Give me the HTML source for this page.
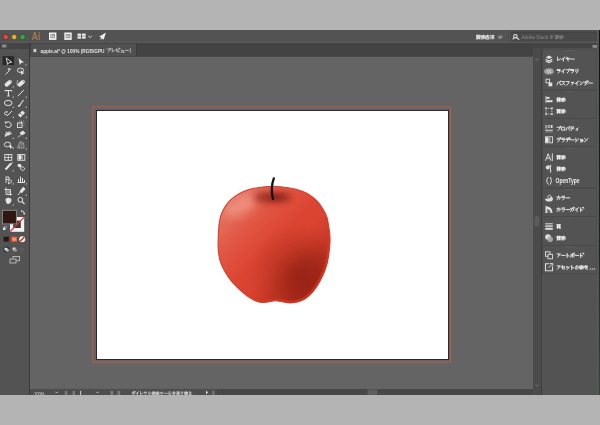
<!DOCTYPE html>
<html><head><meta charset="utf-8"><title>apple.ai - Illustrator</title>
<style>
*{margin:0;padding:0}
html,body{width:600px;height:425px;overflow:hidden;background:#b4b4b4;font-family:"Liberation Sans",sans-serif}
</style></head><body>
<svg width="600" height="425" viewBox="0 0 600 425" style="display:block;will-change:transform"><rect x="0" y="0" width="600" height="425" fill="#b4b4b4"/>
<rect x="0" y="30" width="600" height="13" fill="#535353"/>
<rect x="0" y="42" width="600" height="1" fill="#5a5a5a"/>
<rect x="0" y="43" width="600" height="14" fill="#434343"/>
<rect x="30" y="56" width="503" height="339" fill="#646464"/>
<rect x="30" y="56" width="503" height="1" fill="#4a4a4a"/>
<rect x="31" y="44" width="105" height="12" fill="#505050"/>
<rect x="136" y="44" width="1" height="12" fill="#3c3c3c"/>
<rect x="0" y="43" width="29" height="352" fill="#535353"/>
<rect x="0" y="43" width="29" height="6" fill="#444444"/>
<rect x="29" y="43" width="1" height="352" fill="#393939"/>
<rect x="2" y="44.5" width="4.5" height="3" fill="#8c8c8c"/>
<rect x="9" y="51" width="11" height="0.6" fill="#626262"/>
<rect x="533" y="43" width="8" height="352" fill="#4b4b4b"/>
<path d="M535.5,60.2 L536.8,58.8 L538.1,60.2" fill="none" stroke="#8a8a8a" stroke-width="0.7"/>
<path d="M535.5,384.8 L536.8,386.2 L538.1,384.8" fill="none" stroke="#8a8a8a" stroke-width="0.7"/>
<rect x="541" y="43" width="59" height="352" fill="#535353"/>
<rect x="530" y="43" width="70" height="5" fill="#444444"/>
<rect x="592.5" y="45" width="4.5" height="2.8" fill="#8c8c8c"/>
<rect x="541" y="48" width="1" height="347" fill="#3f3f3f"/>
<rect x="597" y="48" width="3" height="347" fill="#4d4d4d"/>
<rect x="534.6" y="216" width="4.7" height="10.4" rx="2.3" fill="#5c5c5c"/>
<rect x="30" y="389" width="503" height="6" fill="#4e4e4e"/>
<rect x="217" y="389" width="316" height="6" fill="#474747"/>
<rect x="367.5" y="389.5" width="10" height="5.5" rx="1" fill="#5e5e5e"/>
<rect x="92.5" y="105.5" width="359" height="258" fill="none" stroke="#5c6a6b" stroke-width="1" opacity="0.6"/>
<rect x="93.5" y="108.5" width="357" height="252" fill="none" stroke="#5c6a6b" stroke-width="1" opacity="0.6"/>
<rect x="92.6" y="106.8" width="358" height="255.4" fill="none" stroke="#a05a52" stroke-width="1.6"/>
<rect x="96" y="110" width="353" height="250" fill="#2a2a2a"/>
<rect x="97" y="111" width="351" height="248" fill="#ffffff"/>
<defs><clipPath id="ap"><path d="M272.60,186.20 C278.60,186.15 285.13,187.20 290.00,188.00 C294.87,188.80 298.47,189.80 301.80,191.00 C305.13,192.20 307.47,193.53 310.00,195.20 C312.53,196.87 314.83,198.70 317.00,201.00 C319.17,203.30 321.33,206.28 323.00,209.00 C324.67,211.72 326.03,214.35 327.00,217.30 C327.97,220.25 328.33,223.92 328.80,226.70 C329.27,229.48 329.60,231.38 329.80,234.00 C330.00,236.62 330.13,239.25 330.00,242.40 C329.87,245.55 329.47,249.42 329.00,252.90 C328.53,256.38 328.10,259.83 327.20,263.30 C326.30,266.77 325.22,270.00 323.60,273.70 C321.98,277.40 319.67,282.07 317.50,285.50 C315.33,288.93 313.18,291.80 310.60,294.30 C308.02,296.80 305.35,299.05 302.00,300.50 C298.65,301.95 294.00,302.83 290.50,303.00 C287.00,303.17 283.58,301.87 281.00,301.50 C278.42,301.13 277.17,300.72 275.00,300.80 C272.83,300.88 270.28,301.72 268.00,302.00 C265.72,302.28 263.60,302.78 261.30,302.50 C259.00,302.22 256.55,301.37 254.20,300.30 C251.85,299.23 249.55,297.80 247.20,296.10 C244.85,294.40 242.45,292.27 240.10,290.10 C237.75,287.93 235.05,285.25 233.10,283.10 C231.15,280.95 230.00,279.53 228.40,277.20 C226.80,274.87 224.83,271.65 223.50,269.10 C222.17,266.55 221.18,264.32 220.40,261.90 C219.62,259.48 219.18,257.18 218.80,254.60 C218.42,252.02 218.18,249.50 218.10,246.40 C218.02,243.30 218.17,239.40 218.30,236.00 C218.43,232.60 218.63,228.83 218.90,226.00 C219.17,223.17 219.45,221.08 219.90,219.00 C220.35,216.92 220.82,215.40 221.60,213.50 C222.38,211.60 223.32,209.65 224.60,207.60 C225.88,205.55 227.53,203.12 229.30,201.20 C231.07,199.28 232.85,197.73 235.20,196.10 C237.55,194.47 240.27,192.70 243.40,191.40 C246.53,190.10 249.13,189.17 254.00,188.30 C258.87,187.43 266.60,186.25 272.60,186.20 Z"/></clipPath><filter id="b1" x="-50%" y="-50%" width="200%" height="200%"><feGaussianBlur stdDeviation="0.8"/></filter><filter id="b2" x="-50%" y="-50%" width="200%" height="200%"><feGaussianBlur stdDeviation="2"/></filter><filter id="b3" x="-50%" y="-50%" width="200%" height="200%"><feGaussianBlur stdDeviation="3"/></filter><filter id="b5" x="-50%" y="-50%" width="200%" height="200%"><feGaussianBlur stdDeviation="5"/></filter><filter id="b8" x="-50%" y="-50%" width="200%" height="200%"><feGaussianBlur stdDeviation="8"/></filter><linearGradient id="lg" gradientUnits="userSpaceOnUse" x1="228" y1="200" x2="318" y2="288"><stop offset="0" stop-color="#f2a494" stop-opacity="0.55"/><stop offset="0.42" stop-color="#e86a58" stop-opacity="0.18"/><stop offset="0.62" stop-color="#b02818" stop-opacity="0.05"/><stop offset="1" stop-color="#7a1408" stop-opacity="0.55"/></linearGradient><radialGradient id="dk" gradientUnits="userSpaceOnUse" cx="298" cy="274" r="50"><stop offset="0" stop-color="#7a1608" stop-opacity="0.45"/><stop offset="1" stop-color="#7a1608" stop-opacity="0"/></radialGradient><linearGradient id="rimg" gradientUnits="userSpaceOnUse" x1="240" y1="215" x2="320" y2="295"><stop offset="0" stop-color="#e4442e" stop-opacity="0"/><stop offset="0.55" stop-color="#e4442e" stop-opacity="0"/><stop offset="0.8" stop-color="#e8472e" stop-opacity="1"/></linearGradient></defs>
<g clip-path="url(#ap)"><path d="M272.60,186.20 C278.60,186.15 285.13,187.20 290.00,188.00 C294.87,188.80 298.47,189.80 301.80,191.00 C305.13,192.20 307.47,193.53 310.00,195.20 C312.53,196.87 314.83,198.70 317.00,201.00 C319.17,203.30 321.33,206.28 323.00,209.00 C324.67,211.72 326.03,214.35 327.00,217.30 C327.97,220.25 328.33,223.92 328.80,226.70 C329.27,229.48 329.60,231.38 329.80,234.00 C330.00,236.62 330.13,239.25 330.00,242.40 C329.87,245.55 329.47,249.42 329.00,252.90 C328.53,256.38 328.10,259.83 327.20,263.30 C326.30,266.77 325.22,270.00 323.60,273.70 C321.98,277.40 319.67,282.07 317.50,285.50 C315.33,288.93 313.18,291.80 310.60,294.30 C308.02,296.80 305.35,299.05 302.00,300.50 C298.65,301.95 294.00,302.83 290.50,303.00 C287.00,303.17 283.58,301.87 281.00,301.50 C278.42,301.13 277.17,300.72 275.00,300.80 C272.83,300.88 270.28,301.72 268.00,302.00 C265.72,302.28 263.60,302.78 261.30,302.50 C259.00,302.22 256.55,301.37 254.20,300.30 C251.85,299.23 249.55,297.80 247.20,296.10 C244.85,294.40 242.45,292.27 240.10,290.10 C237.75,287.93 235.05,285.25 233.10,283.10 C231.15,280.95 230.00,279.53 228.40,277.20 C226.80,274.87 224.83,271.65 223.50,269.10 C222.17,266.55 221.18,264.32 220.40,261.90 C219.62,259.48 219.18,257.18 218.80,254.60 C218.42,252.02 218.18,249.50 218.10,246.40 C218.02,243.30 218.17,239.40 218.30,236.00 C218.43,232.60 218.63,228.83 218.90,226.00 C219.17,223.17 219.45,221.08 219.90,219.00 C220.35,216.92 220.82,215.40 221.60,213.50 C222.38,211.60 223.32,209.65 224.60,207.60 C225.88,205.55 227.53,203.12 229.30,201.20 C231.07,199.28 232.85,197.73 235.20,196.10 C237.55,194.47 240.27,192.70 243.40,191.40 C246.53,190.10 249.13,189.17 254.00,188.30 C258.87,187.43 266.60,186.25 272.60,186.20 Z" fill="#dc4431"/><rect x="210" y="180" width="130" height="130" fill="url(#lg)"/><rect x="210" y="180" width="130" height="130" fill="url(#dk)"/><ellipse cx="241" cy="206" rx="18" ry="9" fill="#f6b0a2" opacity="0.5" filter="url(#b5)" transform="rotate(-30 241 206)"/><ellipse cx="301" cy="274" rx="14" ry="24" fill="#7a1608" opacity="0.25" filter="url(#b8)" transform="rotate(40 301 274)"/><ellipse cx="273" cy="197.5" rx="19" ry="6" fill="#8a2216" opacity="0.7" filter="url(#b3)"/><ellipse cx="276" cy="197" rx="7" ry="3" fill="#7a1a10" opacity="0.45" filter="url(#b2)"/><path d="M272.60,186.20 C278.60,186.15 285.13,187.20 290.00,188.00 C294.87,188.80 298.47,189.80 301.80,191.00 C305.13,192.20 307.47,193.53 310.00,195.20 C312.53,196.87 314.83,198.70 317.00,201.00 C319.17,203.30 321.33,206.28 323.00,209.00 C324.67,211.72 326.03,214.35 327.00,217.30 C327.97,220.25 328.33,223.92 328.80,226.70 C329.27,229.48 329.60,231.38 329.80,234.00 C330.00,236.62 330.13,239.25 330.00,242.40 C329.87,245.55 329.47,249.42 329.00,252.90 C328.53,256.38 328.10,259.83 327.20,263.30 C326.30,266.77 325.22,270.00 323.60,273.70 C321.98,277.40 319.67,282.07 317.50,285.50 C315.33,288.93 313.18,291.80 310.60,294.30 C308.02,296.80 305.35,299.05 302.00,300.50 C298.65,301.95 294.00,302.83 290.50,303.00 C287.00,303.17 283.58,301.87 281.00,301.50 C278.42,301.13 277.17,300.72 275.00,300.80 C272.83,300.88 270.28,301.72 268.00,302.00 C265.72,302.28 263.60,302.78 261.30,302.50 C259.00,302.22 256.55,301.37 254.20,300.30 C251.85,299.23 249.55,297.80 247.20,296.10 C244.85,294.40 242.45,292.27 240.10,290.10 C237.75,287.93 235.05,285.25 233.10,283.10 C231.15,280.95 230.00,279.53 228.40,277.20 C226.80,274.87 224.83,271.65 223.50,269.10 C222.17,266.55 221.18,264.32 220.40,261.90 C219.62,259.48 219.18,257.18 218.80,254.60 C218.42,252.02 218.18,249.50 218.10,246.40 C218.02,243.30 218.17,239.40 218.30,236.00 C218.43,232.60 218.63,228.83 218.90,226.00 C219.17,223.17 219.45,221.08 219.90,219.00 C220.35,216.92 220.82,215.40 221.60,213.50 C222.38,211.60 223.32,209.65 224.60,207.60 C225.88,205.55 227.53,203.12 229.30,201.20 C231.07,199.28 232.85,197.73 235.20,196.10 C237.55,194.47 240.27,192.70 243.40,191.40 C246.53,190.10 249.13,189.17 254.00,188.30 C258.87,187.43 266.60,186.25 272.60,186.20 Z" fill="none" stroke="url(#rimg)" stroke-width="3.2" opacity="0.8" filter="url(#b1)"/></g>
<path d="M272.60,186.20 C278.60,186.15 285.13,187.20 290.00,188.00 C294.87,188.80 298.47,189.80 301.80,191.00 C305.13,192.20 307.47,193.53 310.00,195.20 C312.53,196.87 314.83,198.70 317.00,201.00 C319.17,203.30 321.33,206.28 323.00,209.00 C324.67,211.72 326.03,214.35 327.00,217.30 C327.97,220.25 328.33,223.92 328.80,226.70 C329.27,229.48 329.60,231.38 329.80,234.00 C330.00,236.62 330.13,239.25 330.00,242.40 C329.87,245.55 329.47,249.42 329.00,252.90 C328.53,256.38 328.10,259.83 327.20,263.30 C326.30,266.77 325.22,270.00 323.60,273.70 C321.98,277.40 319.67,282.07 317.50,285.50 C315.33,288.93 313.18,291.80 310.60,294.30 C308.02,296.80 305.35,299.05 302.00,300.50 C298.65,301.95 294.00,302.83 290.50,303.00 C287.00,303.17 283.58,301.87 281.00,301.50 C278.42,301.13 277.17,300.72 275.00,300.80 C272.83,300.88 270.28,301.72 268.00,302.00 C265.72,302.28 263.60,302.78 261.30,302.50 C259.00,302.22 256.55,301.37 254.20,300.30 C251.85,299.23 249.55,297.80 247.20,296.10 C244.85,294.40 242.45,292.27 240.10,290.10 C237.75,287.93 235.05,285.25 233.10,283.10 C231.15,280.95 230.00,279.53 228.40,277.20 C226.80,274.87 224.83,271.65 223.50,269.10 C222.17,266.55 221.18,264.32 220.40,261.90 C219.62,259.48 219.18,257.18 218.80,254.60 C218.42,252.02 218.18,249.50 218.10,246.40 C218.02,243.30 218.17,239.40 218.30,236.00 C218.43,232.60 218.63,228.83 218.90,226.00 C219.17,223.17 219.45,221.08 219.90,219.00 C220.35,216.92 220.82,215.40 221.60,213.50 C222.38,211.60 223.32,209.65 224.60,207.60 C225.88,205.55 227.53,203.12 229.30,201.20 C231.07,199.28 232.85,197.73 235.20,196.10 C237.55,194.47 240.27,192.70 243.40,191.40 C246.53,190.10 249.13,189.17 254.00,188.30 C258.87,187.43 266.60,186.25 272.60,186.20 Z" fill="none" stroke="#cf3522" stroke-width="1.1" opacity="0.9"/>
<path d="M273.8,178.4 Q270.2,188 273,199" fill="none" stroke="#121212" stroke-width="2.3" stroke-linecap="round"/>
<circle cx="5.7" cy="37" r="2.7" fill="#e9463f" stroke="#3a3a3a" stroke-width="0.7"/>
<circle cx="14.2" cy="37" r="2.7" fill="#e2b32c" stroke="#3a3a3a" stroke-width="0.7"/>
<circle cx="22.6" cy="37" r="2.7" fill="#2fae3a" stroke="#3a3a3a" stroke-width="0.7"/>
<text x="31.7" y="39.7" font-family="Liberation Sans" font-weight="bold" font-size="10.4" fill="#a87852" textLength="8.6" lengthAdjust="spacingAndGlyphs">Ai</text>
<rect x="49" y="32.5" width="7.4" height="7.4" fill="#f2f2f2"/>
<rect x="50.4" y="34.1" width="4.6" height="4.1" fill="#8e8e8e"/>
<rect x="51.1" y="35" width="1.3" height="2.4" fill="#d8d8d8"/><rect x="52.9" y="35.8" width="1.3" height="1.6" fill="#d8d8d8"/>
<rect x="64.3" y="32.5" width="7.4" height="7.4" fill="#f2f2f2"/>
<rect x="65.7" y="34.1" width="4.6" height="4.1" fill="#8e8e8e"/>
<rect x="66.39999999999999" y="35" width="1.3" height="2.4" fill="#d8d8d8"/><rect x="68.2" y="35.8" width="1.3" height="1.6" fill="#d8d8d8"/>
<rect x="77.5" y="33.6" width="3.6" height="2.2" fill="#eeeeee"/><rect x="82" y="33.6" width="3.7" height="2.2" fill="#eeeeee"/>
<rect x="77.5" y="36.4" width="3.6" height="2.2" fill="#eeeeee"/><rect x="82" y="36.4" width="3.7" height="2.2" fill="#eeeeee"/>
<path d="M88,35.8 L90,37.6 L92,35.8" fill="none" stroke="#cfcfcf" stroke-width="0.9"/>
<path d="M106,32.5 L99,36.8 L101.2,37.2 L100.2,39.8 L102.8,38.4 L103.5,40 Z" fill="#f0f0f0"/>
<g fill="none" stroke="#f2f2f2" stroke-width="1.7" stroke-linecap="square" stroke-linejoin="miter"><path transform="translate(476.00,34.70) scale(0.460)" d="M1,1.5 H9 M1,4.5 H9 M1.5,7.5 H8.5 M2.5,1 V9.5 M7,1 V9.5 M4.5,3 L2,9.5 M5.5,6 L9,9.5"/><path transform="translate(480.60,34.70) scale(0.460)" d="M1.5,2 H4.5 V5 H1.5 Z M1,7 H5 M3,5 V9.5 M6,1 V9.5 M6,2 H9 V8 M6,5 H9"/><path transform="translate(485.20,34.70) scale(0.460)" d="M1,2.5 H9 M5,1 V4.5 M2,4.5 H8 V9.5 H2 Z M2,7 H8"/><path transform="translate(489.80,34.70) scale(0.460)" d="M1,1.5 L3,3 M1,5 L3,6.5 M1.5,9.5 L3.5,7 M4.5,2 H9 M5,4.5 H8.5 M6.8,1 V9.5 M4.5,7 H9.2"/></g>
<circle cx="500.2" cy="37" r="2.6" fill="#6a6a6a"/><path d="M498.8,36.4 L500.2,37.8 L501.6,36.4" fill="none" stroke="#e0e0e0" stroke-width="0.8"/>
<rect x="508" y="32" width="0.8" height="10" fill="#484848"/><rect x="508.8" y="32" width="0.6" height="10" fill="#5c5c5c"/>
<rect x="510.5" y="31.8" width="87" height="9.8" fill="#494949"/>
<rect x="510.5" y="31.8" width="87" height="0.8" fill="#3f3f3f"/>
<circle cx="515.4" cy="36.2" r="1.7" fill="none" stroke="#e4e4e4" stroke-width="1.1"/><path d="M512.8,39.4 Q513.5,38.2 514.3,37.8 M516.5,37.8 L519.3,39.6" fill="none" stroke="#e4e4e4" stroke-width="1.1"/>
<text x="521.5" y="39.2" font-family="Liberation Sans" font-size="5.6" fill="#8c8c8c" textLength="26.5" lengthAdjust="spacingAndGlyphs">Adobe Stock</text>
<g fill="none" stroke="#8c8c8c" stroke-width="1.3" stroke-linecap="square" stroke-linejoin="miter"><path transform="translate(549.50,35.00) scale(0.400)" d="M2,2.6 H8 M5,1 L2,7.5 Q5,5 7,6.5 Q8.5,8 4,9.4 M8.8,4.6 L6.8,5.8"/></g>
<g fill="none" stroke="#8c8c8c" stroke-width="1.3" stroke-linecap="square" stroke-linejoin="miter"><path transform="translate(555.00,35.00) scale(0.400)" d="M1,1.5 H9 M1,4.5 H9 M1.5,7.5 H8.5 M2.5,1 V9.5 M7,1 V9.5 M4.5,3 L2,9.5 M5.5,6 L9,9.5"/><path transform="translate(559.40,35.00) scale(0.400)" d="M1.5,2 H4.5 V5 H1.5 Z M1,7 H5 M3,5 V9.5 M6,1 V9.5 M6,2 H9 V8 M6,5 H9"/></g>
<path d="M33.6,49.2 L36.2,51.8 M36.2,49.2 L33.6,51.8" stroke="#e8e8e8" stroke-width="1.2"/>
<text x="40.5" y="52.6" font-family="Liberation Sans" font-size="6.2" font-weight="bold" fill="#e4e4e4" textLength="64" lengthAdjust="spacingAndGlyphs">apple.ai* @ 100% (RGB/GPU</text>
<g fill="none" stroke="#e4e4e4" stroke-width="1.6" stroke-linecap="square" stroke-linejoin="miter"><path transform="translate(106.50,48.20) scale(0.420)" d="M1.5,2.2 H8.2 Q7.5,7.5 3.5,9.6 M9.4,0.9 m-1,0 a1,1 0 1,0 2,0 a1,1 0 1,0 -2,0"/><path transform="translate(111.10,48.20) scale(0.420)" d="M2.5,1 V8.8 L9,4.5"/><path transform="translate(115.70,48.20) scale(0.420)" d="M2.5,1 V8.5 H8.5 M2.5,5 L7.2,3.5 M8.2,0.3 L8.9,1.8 M9.6,0.1 L10.3,1.6"/><path transform="translate(120.30,48.20) scale(0.420)" d="M3,5.2 H7.2 V9.3 M2,9.3 H9"/><path transform="translate(124.90,48.20) scale(0.420)" d="M1,5.2 H9.2"/></g>
<text x="129.5" y="52.4" font-family="Liberation Sans" font-size="6" fill="#dcdcdc">)</text>
<rect x="542.5" y="49" width="54.5" height="41" fill="none" stroke="#4a4a4a" stroke-width="0.8"/>
<rect x="565" y="50.3" width="10" height="0.6" fill="#626262"/>
<rect x="542.5" y="90" width="54.5" height="28.5" fill="none" stroke="#4a4a4a" stroke-width="0.8"/>
<rect x="565" y="91.3" width="10" height="0.6" fill="#626262"/>
<rect x="542.5" y="118.5" width="54.5" height="28.0" fill="none" stroke="#4a4a4a" stroke-width="0.8"/>
<rect x="565" y="119.8" width="10" height="0.6" fill="#626262"/>
<rect x="542.5" y="146.5" width="54.5" height="41.5" fill="none" stroke="#4a4a4a" stroke-width="0.8"/>
<rect x="565" y="147.8" width="10" height="0.6" fill="#626262"/>
<rect x="542.5" y="188" width="54.5" height="28.5" fill="none" stroke="#4a4a4a" stroke-width="0.8"/>
<rect x="565" y="189.3" width="10" height="0.6" fill="#626262"/>
<rect x="542.5" y="216.5" width="54.5" height="29.0" fill="none" stroke="#4a4a4a" stroke-width="0.8"/>
<rect x="565" y="217.8" width="10" height="0.6" fill="#626262"/>
<rect x="542.5" y="245.5" width="54.5" height="28.5" fill="none" stroke="#4a4a4a" stroke-width="0.8"/>
<rect x="565" y="246.8" width="10" height="0.6" fill="#626262"/>
<g fill="none" stroke="#efefef" stroke-width="2.1" stroke-linecap="square" stroke-linejoin="miter"><path transform="translate(556.50,56.80) scale(0.440)" d="M2.5,1 V8.8 L9,4.5"/><path transform="translate(561.05,56.80) scale(0.440)" d="M8.5,1 L1.5,6.2 M5.2,3.8 V9.6"/><path transform="translate(565.60,56.80) scale(0.440)" d="M1,4.2 L9,3.2 L7.2,6 M3.2,1 L5.8,9.6"/><path transform="translate(570.15,56.80) scale(0.440)" d="M1,5.2 H9.2"/></g>
<path d="M549,55.5 L552.3,57.2 L549,59 L545.7,57.2 Z" fill="#dedede"/><path d="M545.7,59.2 L549,61 L552.3,59.2 M545.7,61 L549,62.7 L552.3,61" fill="none" stroke="#dedede" stroke-width="1.1"/>
<g fill="none" stroke="#efefef" stroke-width="2.1" stroke-linecap="square" stroke-linejoin="miter"><path transform="translate(556.50,68.80) scale(0.440)" d="M2,1.5 H8 M1.5,4 H8.5 Q7.5,8 4,9.6"/><path transform="translate(561.05,68.80) scale(0.440)" d="M8.5,1 L1.5,6.2 M5.2,3.8 V9.6"/><path transform="translate(565.60,68.80) scale(0.440)" d="M1.5,2.2 H8.2 Q7.5,7.5 3.5,9.6 M9.4,0.9 m-1,0 a1,1 0 1,0 2,0 a1,1 0 1,0 -2,0"/><path transform="translate(570.15,68.80) scale(0.440)" d="M2,1.5 H8 M1.5,4 H8.5 Q7.5,8 4,9.6"/><path transform="translate(574.70,68.80) scale(0.440)" d="M2.8,1.2 V6.2 M7.2,1 V5.5 Q7,8.5 3.8,9.8"/></g>
<ellipse cx="549" cy="71.4" rx="4.9" ry="3.1" fill="#9c9c9c"/><path d="M548.8,70 a1.5,1.3 0 1,0 0.2,2.6 M551,70 a1.5,1.3 0 1,0 0.2,2.6" fill="none" stroke="#e8e8e8" stroke-width="0.8"/>
<g fill="none" stroke="#efefef" stroke-width="2.1" stroke-linecap="square" stroke-linejoin="miter"><path transform="translate(556.50,80.80) scale(0.440)" d="M3.5,3 L1,9 M6,3 L9.2,9 M9.2,1.3 m-1,0 a1,1 0 1,0 2,0 a1,1 0 1,0 -2,0"/><path transform="translate(561.05,80.80) scale(0.440)" d="M2,1.8 H8 Q6,6.5 1.5,9.5 M5.5,6.3 L9.2,9.5"/><path transform="translate(565.60,80.80) scale(0.440)" d="M1.5,2 H8.5 Q8,7 3,9.6"/><path transform="translate(570.15,80.80) scale(0.440)" d="M3,3.6 H8.6 L6.8,6 M6,5.2 Q5.5,8.2 3.4,9.6"/><path transform="translate(574.70,80.80) scale(0.440)" d="M8.5,1 L1.5,6.2 M5.2,3.8 V9.6"/><path transform="translate(579.25,80.80) scale(0.440)" d="M1.8,2 L4,3.8 M2,9.2 Q7,7.5 9.2,2.5"/><path transform="translate(583.80,80.80) scale(0.440)" d="M4.5,1 L1.5,5 M3.5,2.5 H8 Q7,7.5 2.5,9.6 M3.8,5 L7,6.8 M8.2,0.3 L8.9,1.8 M9.6,0.1 L10.3,1.6"/><path transform="translate(588.35,80.80) scale(0.440)" d="M1,5.2 H9.2"/></g>
<rect x="546" y="79.2" width="3.6" height="3.6" fill="none" stroke="#dedede" stroke-width="0.9"/><rect x="548.5" y="82.5" width="3.8" height="3.8" fill="#dedede"/>
<g fill="none" stroke="#efefef" stroke-width="2.1" stroke-linecap="square" stroke-linejoin="miter"><path transform="translate(556.50,97.50) scale(0.440)" d="M1,1.5 H9 M1,4.5 H9 M1.5,7.5 H8.5 M2.5,1 V9.5 M7,1 V9.5 M4.5,3 L2,9.5 M5.5,6 L9,9.5"/><path transform="translate(561.05,97.50) scale(0.440)" d="M1.5,2 H4.5 V5 H1.5 Z M1,7 H5 M3,5 V9.5 M6,1 V9.5 M6,2 H9 V8 M6,5 H9"/></g>
<rect x="545.5" y="96.2" width="1" height="6.5" fill="#dedede"/><rect x="546.5" y="96.9" width="3" height="2" fill="#dedede"/><rect x="546.5" y="100.2" width="6" height="2" fill="#dedede"/>
<g fill="none" stroke="#efefef" stroke-width="2.1" stroke-linecap="square" stroke-linejoin="miter"><path transform="translate(556.50,109.00) scale(0.440)" d="M1,1.5 H9 M1,4.5 H9 M1.5,7.5 H8.5 M2.5,1 V9.5 M7,1 V9.5 M4.5,3 L2,9.5 M5.5,6 L9,9.5"/><path transform="translate(561.05,109.00) scale(0.440)" d="M1.5,2 H4.5 V5 H1.5 Z M1,7 H5 M3,5 V9.5 M6,1 V9.5 M6,2 H9 V8 M6,5 H9"/></g>
<rect x="546.2" y="108.4" width="5.6" height="5.6" fill="none" stroke="#dedede" stroke-width="0.8" stroke-dasharray="1.2 0.8"/><rect x="545.2" y="107.4" width="1.6" height="1.6" fill="#dedede"/><rect x="551.2" y="107.4" width="1.6" height="1.6" fill="#dedede"/><rect x="545.2" y="113.4" width="1.6" height="1.6" fill="#dedede"/><rect x="551.2" y="113.4" width="1.6" height="1.6" fill="#dedede"/>
<g fill="none" stroke="#efefef" stroke-width="2.1" stroke-linecap="square" stroke-linejoin="miter"><path transform="translate(556.50,126.30) scale(0.440)" d="M1.5,2.2 H8.2 Q7.5,7.5 3.5,9.6 M9.4,0.9 m-1,0 a1,1 0 1,0 2,0 a1,1 0 1,0 -2,0"/><path transform="translate(561.05,126.30) scale(0.440)" d="M2,2 H8.2 V8.6 H2 Z"/><path transform="translate(565.60,126.30) scale(0.440)" d="M3.5,3 L1,9 M6,3 L9.2,9 M9.2,1.3 m-1,0 a1,1 0 1,0 2,0 a1,1 0 1,0 -2,0"/><path transform="translate(570.15,126.30) scale(0.440)" d="M2.5,1.5 H7.5 M1,4.2 H9 M5,4.2 Q5,8 3,9.6"/><path transform="translate(574.70,126.30) scale(0.440)" d="M7.5,4 L3,7.5 M5.5,6 V9.8"/></g>
<rect x="545.5" y="125.0" width="1" height="3.5" fill="#dedede"/><circle cx="549" cy="126.5" r="1.2" fill="none" stroke="#dedede" stroke-width="0.8"/><rect x="551" y="125.0" width="1.5" height="3" fill="#dedede"/><rect x="545.2" y="129.7" width="7.6" height="1" fill="#dedede"/><rect x="545.2" y="131.5" width="7.6" height="0.8" fill="#9a9a9a"/>
<g fill="none" stroke="#efefef" stroke-width="2.1" stroke-linecap="square" stroke-linejoin="miter"><path transform="translate(556.50,137.60) scale(0.440)" d="M4,1 L1.5,4.5 M3,2.8 H8 Q7,7.5 3,9.6 M8.2,0.3 L8.9,1.8 M9.6,0.1 L10.3,1.6"/><path transform="translate(561.05,137.60) scale(0.440)" d="M2,1.5 H8 M1.5,4 H8.5 Q7.5,8 4,9.6"/><path transform="translate(565.60,137.60) scale(0.440)" d="M2.5,1.5 H7.5 M1,4.2 H9 M5,4.2 Q5,8 3,9.6 M8.2,0.3 L8.9,1.8 M9.6,0.1 L10.3,1.6"/><path transform="translate(570.15,137.60) scale(0.440)" d="M1,5.2 H9.2"/><path transform="translate(574.70,137.60) scale(0.440)" d="M2,1.8 L3.8,3 M1.5,4.8 L3.3,6 M2,9.6 Q7,7.5 9.2,2.5"/><path transform="translate(579.25,137.60) scale(0.440)" d="M3,4.2 H8 V9.6 H3 M3,6.9 H8"/><path transform="translate(583.80,137.60) scale(0.440)" d="M1.8,2 L4,3.8 M2,9.2 Q7,7.5 9.2,2.5"/></g>
<rect x="545.5" y="136.8" width="7" height="6" fill="none" stroke="#dedede" stroke-width="0.9"/><rect x="546" y="137.3" width="2" height="5" fill="#f0f0f0"/><rect x="548" y="137.3" width="2.5" height="5" fill="#a0a0a0"/>
<g fill="none" stroke="#efefef" stroke-width="2.1" stroke-linecap="square" stroke-linejoin="miter"><path transform="translate(556.50,155.00) scale(0.440)" d="M1,1.5 H9 M1,4.5 H9 M1.5,7.5 H8.5 M2.5,1 V9.5 M7,1 V9.5 M4.5,3 L2,9.5 M5.5,6 L9,9.5"/><path transform="translate(561.05,155.00) scale(0.440)" d="M1.5,2 H4.5 V5 H1.5 Z M1,7 H5 M3,5 V9.5 M6,1 V9.5 M6,2 H9 V8 M6,5 H9"/></g>
<path d="M545.5,160.7 L548.2,153.7 L550.8,160.7 M546.7,158.2 H549.6 M552.3,153.39999999999998 V161.0" fill="none" stroke="#dedede" stroke-width="1"/>
<g fill="none" stroke="#efefef" stroke-width="2.1" stroke-linecap="square" stroke-linejoin="miter"><path transform="translate(556.50,166.60) scale(0.440)" d="M1,1.5 H9 M1,4.5 H9 M1.5,7.5 H8.5 M2.5,1 V9.5 M7,1 V9.5 M4.5,3 L2,9.5 M5.5,6 L9,9.5"/><path transform="translate(561.05,166.60) scale(0.440)" d="M1.5,2 H4.5 V5 H1.5 Z M1,7 H5 M3,5 V9.5 M6,1 V9.5 M6,2 H9 V8 M6,5 H9"/></g>
<path d="M548,165.8 h3.5 M550.5,165.8 v6.5" fill="none" stroke="#dedede" stroke-width="0.9"/><circle cx="547.8" cy="167.5" r="2" fill="#dedede"/><rect x="550.2" y="170.3" width="1" height="2" fill="#dedede"/>
<text x="555.6" y="183.10000000000002" font-family="Liberation Sans" font-weight="bold" font-size="6.6" fill="#ececec" textLength="24" lengthAdjust="spacingAndGlyphs">OpenType</text>
<path d="M548.5,177.0 Q545,180.8 548.5,184.60000000000002 M550.5,177.0 Q552.5,180.8 550.2,184.60000000000002" fill="none" stroke="#dedede" stroke-width="1"/>
<g fill="none" stroke="#efefef" stroke-width="2.1" stroke-linecap="square" stroke-linejoin="miter"><path transform="translate(556.50,195.60) scale(0.440)" d="M1,3.5 H8.5 Q8.5,9 6.5,9 M4.8,1 Q4.5,7 1.5,9.6"/><path transform="translate(561.05,195.60) scale(0.440)" d="M2,1.5 H8 M1.5,4 H8.5 Q7.5,8 4,9.6"/><path transform="translate(565.60,195.60) scale(0.440)" d="M1,5.2 H9.2"/></g>
<path d="M545,198.8 a4,2.8 0 1,0 8,0 a4,2.8 0 0,0 -2,-2.4 l-2,2 z" fill="#dedede"/><circle cx="549.5" cy="196.8" r="1.6" fill="#535353" stroke="#dedede" stroke-width="0.8"/>
<g fill="none" stroke="#efefef" stroke-width="2.1" stroke-linecap="square" stroke-linejoin="miter"><path transform="translate(556.50,207.30) scale(0.440)" d="M1,3.5 H8.5 Q8.5,9 6.5,9 M4.8,1 Q4.5,7 1.5,9.6"/><path transform="translate(561.05,207.30) scale(0.440)" d="M2,1.5 H8 M1.5,4 H8.5 Q7.5,8 4,9.6"/><path transform="translate(565.60,207.30) scale(0.440)" d="M1,5.2 H9.2"/><path transform="translate(570.15,207.30) scale(0.440)" d="M1,3.5 H8 Q8,9 6.2,9 M4.5,1 Q4.2,7 1.2,9.6 M8.2,0.3 L8.9,1.8 M9.6,0.1 L10.3,1.6"/><path transform="translate(574.70,207.30) scale(0.440)" d="M8.5,1 L1.5,6.2 M5.2,3.8 V9.6"/><path transform="translate(579.25,207.30) scale(0.440)" d="M3.2,1 V9.8 M3.2,4.5 L7.5,6.5 M8.2,0.3 L8.9,1.8 M9.6,0.1 L10.3,1.6"/></g>
<path d="M545.5,213.0 V206.0 Q552.5,206.5 552.5,213.0 Z" fill="#dedede"/><path d="M547.2,213.0 V209.0 Q550.5,209.5 550.8,213.0" fill="#6a6a6a"/>
<g fill="none" stroke="#efefef" stroke-width="2.1" stroke-linecap="square" stroke-linejoin="miter"><path transform="translate(556.50,224.10) scale(0.440)" d="M1,1.5 H9 M1,4.5 H9 M1.5,7.5 H8.5 M2.5,1 V9.5 M7,1 V9.5 M4.5,3 L2,9.5 M5.5,6 L9,9.5"/></g>
<rect x="545.2" y="223.3" width="7.6" height="1" fill="#dedede"/><rect x="545.2" y="225.4" width="7.6" height="1.4" fill="#dedede"/><rect x="545.2" y="227.8" width="7.6" height="2" fill="#dedede"/>
<g fill="none" stroke="#efefef" stroke-width="2.1" stroke-linecap="square" stroke-linejoin="miter"><path transform="translate(556.50,235.80) scale(0.440)" d="M1,1.5 H9 M1,4.5 H9 M1.5,7.5 H8.5 M2.5,1 V9.5 M7,1 V9.5 M4.5,3 L2,9.5 M5.5,6 L9,9.5"/><path transform="translate(561.05,235.80) scale(0.440)" d="M1.5,2 H4.5 V5 H1.5 Z M1,7 H5 M3,5 V9.5 M6,1 V9.5 M6,2 H9 V8 M6,5 H9"/></g>
<circle cx="548" cy="237" r="2.8" fill="#dedede"/><circle cx="550.2" cy="239.2" r="2.8" fill="#a8a8a8" opacity="0.9"/>
<g fill="none" stroke="#efefef" stroke-width="2.1" stroke-linecap="square" stroke-linejoin="miter"><path transform="translate(556.50,253.10) scale(0.440)" d="M1.5,1.8 H9 L6.5,5 M5.5,4 Q5,8 2.5,9.6"/><path transform="translate(561.05,253.10) scale(0.440)" d="M1,5.2 H9.2"/><path transform="translate(565.60,253.10) scale(0.440)" d="M3.5,1 V9.8 M3.5,4.5 L8,6.8"/><path transform="translate(570.15,253.10) scale(0.440)" d="M1,4 H8.6 M4.8,1 V9.6 M2.4,6 L1,8.5 M7.2,6 L8.6,8.5 M8.2,0.3 L8.9,1.8 M9.6,0.1 L10.3,1.6"/><path transform="translate(574.70,253.10) scale(0.440)" d="M1,5.2 H9.2"/><path transform="translate(579.25,253.10) scale(0.440)" d="M3.2,1 V9.8 M3.2,4.5 L7.5,6.5 M8.2,0.3 L8.9,1.8 M9.6,0.1 L10.3,1.6"/></g>
<rect x="545.5" y="251.8" width="4.5" height="4.5" fill="none" stroke="#dedede" stroke-width="0.9"/><rect x="548" y="254.3" width="4.5" height="4.5" fill="#535353" stroke="#dedede" stroke-width="0.9"/>
<g fill="none" stroke="#efefef" stroke-width="2.1" stroke-linecap="square" stroke-linejoin="miter"><path transform="translate(556.50,265.10) scale(0.440)" d="M1.5,1.8 H9 L6.5,5 M5.5,4 Q5,8 2.5,9.6"/><path transform="translate(561.05,265.10) scale(0.440)" d="M1,4.8 L9,3.6 L6.5,6.4 M3,1 V8.6 H8.5"/><path transform="translate(565.60,265.10) scale(0.440)" d="M2.5,4 L3.2,6 M4.8,3.6 L5.5,5.6 M8.5,3.8 Q7,8.5 3.5,9.8"/><path transform="translate(570.15,265.10) scale(0.440)" d="M3.5,1 V9.8 M3.5,4.5 L8,6.8"/><path transform="translate(574.70,265.10) scale(0.440)" d="M5.2,2.2 Q4.5,8 2.6,8.8 Q0.8,9 1,6 Q1.5,2 5.5,2 Q9,2.2 9,5.5 Q8.8,8.6 5.5,9.4"/><path transform="translate(579.25,265.10) scale(0.440)" d="M1.5,2 H4.5 V5 H1.5 Z M1,7 H5 M3,5 V9.5 M6,1 V9.5 M6,2 H9 V8 M6,5 H9"/><path transform="translate(583.80,265.10) scale(0.440)" d="M2,2.8 L8,2.2 M1.5,4.8 L8.5,4.2 M4,1 L7.2,6.6 M2.5,7.2 Q4,9.8 8,9.3"/><path transform="translate(588.35,265.10) scale(0.440)" d="M4.5,9 h0.8"/><path transform="translate(590.40,265.10) scale(0.440)" d="M4.5,9 h0.8"/><path transform="translate(592.44,265.10) scale(0.440)" d="M4.5,9 h0.8"/></g>
<path d="M549.5,263.8 H545.5 V270.8 H552.5 V266.8" fill="none" stroke="#dedede" stroke-width="1.1"/><path d="M548.5,267.8 L552.5,263.8 M550,263.5 H552.8 V266.3" fill="none" stroke="#dedede" stroke-width="0.9"/>
<rect x="2.5" y="56.2" width="11.6" height="8.8" fill="#282828"/>
<path d="M6.3,58 L11.8,62.2 L9,62.6 L7.6,64.5 Z" fill="none" stroke="#e4e4e4" stroke-width="0.9"/>
<path d="M18.5,58 L24,62.4 L21.3,62.7 L19.8,65 Z" fill="#e4e4e4"/><path d="M26.5,63.5 L26.5,65.5 L24.5,65.5 Z" fill="#a8a8a8"/>
<path d="M5.5,74.5 L10,70 M9,68 v2.5 M7.8,69.2 h2.5 M11,68.5 l-1,1" fill="none" stroke="#e4e4e4" stroke-width="0.9"/>
<ellipse cx="20.5" cy="70.3" rx="3.2" ry="2.2" fill="none" stroke="#e4e4e4" stroke-width="0.9"/><path d="M20.5,70 L24.5,73.5 L22.5,73.8 L21.5,75.3 Z" fill="#e4e4e4"/>
<rect x="4.2" y="81.2" width="8.2" height="4" rx="1.8" fill="#e4e4e4" transform="rotate(-40 8.3 83.2)"/><path d="M9.6,80.3 L11.3,82.4" stroke="#535353" stroke-width="0.6"/><path d="M14,85.5 L14,87.5 L12,87.5 Z" fill="#a8a8a8"/>
<rect x="17.2" y="81.2" width="8.2" height="4" rx="1.8" fill="#e4e4e4" transform="rotate(-40 21.3 83.2)"/><path d="M22.6,80.3 L24.3,82.4" stroke="#535353" stroke-width="0.6"/><path d="M17.8,80 Q16.2,83 17.5,86" fill="none" stroke="#b8b8b8" stroke-width="0.9"/>
<path d="M5.2,90.5 H11.6 M8.4,90.5 V96 M7.2,96 H9.6 M5.2,90.2 V91.5 M11.6,90.2 V91.5" fill="none" stroke="#e4e4e4" stroke-width="1.1"/><path d="M14,95.8 L14,97.8 L12,97.8 Z" fill="#a8a8a8"/>
<path d="M17.8,96.2 L23.8,90" fill="none" stroke="#e4e4e4" stroke-width="1"/><path d="M27,96 L27,98 L25,98 Z" fill="#a8a8a8"/>
<ellipse cx="8.2" cy="103" rx="3.8" ry="2.6" fill="none" stroke="#e4e4e4" stroke-width="1"/><path d="M14,106 L14,108 L12,108 Z" fill="#a8a8a8"/>
<path d="M23.5,100 L19.5,105.5" stroke="#e4e4e4" stroke-width="1.1"/><path d="M19.8,104.8 Q17.5,105 17.8,106.8 Q19.5,107 20.8,105.6 Z" fill="#e4e4e4"/><path d="M27,106 L27,108 L25,108 Z" fill="#a8a8a8"/>
<path d="M8,112 Q4.5,111 4.5,113.5 Q5,115.5 7,114.5 M7,116 L12,111" fill="none" stroke="#e4e4e4" stroke-width="1"/><path d="M14,116 L14,118 L12,118 Z" fill="#a8a8a8"/>
<path d="M22.5,110.5 L25,113 L20.5,117.5 L18,115 Z" fill="#e4e4e4"/><path d="M20,113 L22.5,115.5" stroke="#535353" stroke-width="0.7"/><path d="M27,116 L27,118 L25,118 Z" fill="#a8a8a8"/>
<path d="M5.8,122.5 Q9,120.5 11,123.5 Q12,127 8.5,127.5 Q6,127.5 5.5,125.5" fill="none" stroke="#e4e4e4" stroke-width="1"/><path d="M4.5,121.5 L7.2,122 L5.5,124 Z" fill="#e4e4e4"/>
<rect x="17.5" y="123" width="4.5" height="4.5" fill="none" stroke="#e4e4e4" stroke-width="0.9"/><rect x="19.5" y="121" width="4.5" height="4.5" fill="none" stroke="#9a9a9a" stroke-width="0.8" stroke-dasharray="1 0.7"/><circle cx="21.5" cy="122.5" r="0.9" fill="#e4e4e4"/>
<path d="M5,136.5 L10,131.5 M6,132 L9,135 M5,134 Q8,136 11.5,133" fill="none" stroke="#e4e4e4" stroke-width="1.2"/><path d="M14,137 L14,139 L12,139 Z" fill="#a8a8a8"/>
<path d="M23,131 L25,133 L22,135 L20,133 Z M21,134.5 L18,137.5" fill="#e4e4e4" stroke="#e4e4e4" stroke-width="0.9"/><path d="M27,137 L27,139 L25,139 Z" fill="#a8a8a8"/>
<ellipse cx="7.5" cy="144.5" rx="3.2" ry="2.4" fill="none" stroke="#e4e4e4" stroke-width="0.9"/><path d="M9.5,144.2 L12.8,147.5 L11,147.7 L10.3,149 Z" fill="#f2f2f2"/><path d="M14,147 L14,149 L12,149 Z" fill="#a8a8a8"/>
<path d="M17.5,148 L20,141.5 L23.5,143 L24,148 Z" fill="none" stroke="#b0b0b0" stroke-width="0.8"/><path d="M19,148 L21,142.5 M21,148 L22.5,142.5" stroke="#b0b0b0" stroke-width="0.6"/><path d="M27,147.5 L27,149.5 L25,149.5 Z" fill="#a8a8a8"/>
<rect x="4.8" y="154.5" width="7" height="5.8" fill="none" stroke="#e4e4e4" stroke-width="0.9"/><path d="M8.3,154.5 V160.3 M4.8,157.4 H11.8" stroke="#e4e4e4" stroke-width="0.8"/>
<rect x="17.8" y="154.5" width="7" height="5.8" fill="none" stroke="#e4e4e4" stroke-width="0.9"/><rect x="18.5" y="155.2" width="2.5" height="4.4" fill="#f0f0f0"/><rect x="21" y="155.2" width="2" height="4.4" fill="#a0a0a0"/>
<path d="M11,163.5 L5.5,169.5" stroke="#e4e4e4" stroke-width="2"/><path d="M11.5,163 L12,163.5" stroke="#e4e4e4" stroke-width="2.6"/><path d="M14,169.5 L14,171.5 L12,171.5 Z" fill="#a8a8a8"/>
<rect x="17.5" y="164" width="4" height="3.2" rx="1.5" fill="#e4e4e4" transform="rotate(25 19.5 165.6)"/><rect x="20.5" y="167" width="4" height="3.2" rx="1.5" fill="none" stroke="#e4e4e4" stroke-width="0.8" transform="rotate(25 22.5 168.6)"/>
<path d="M6,176.5 V183 M6,177 h3 v2.5 h-3" fill="none" stroke="#e4e4e4" stroke-width="0.9"/><circle cx="10" cy="181.5" r="1.6" fill="none" stroke="#e4e4e4" stroke-width="0.8"/><circle cx="8.5" cy="183.5" r="0.7" fill="#e4e4e4"/><path d="M14,182.5 L14,184.5 L12,184.5 Z" fill="#a8a8a8"/>
<path d="M17.5,182.5 H25 M18.5,182.5 V179 M20.5,182.5 V176.5 M22.5,182.5 V178 M24.5,182.5 V180" fill="none" stroke="#e4e4e4" stroke-width="1"/><path d="M27,182.5 L27,184.5 L25,184.5 Z" fill="#a8a8a8"/>
<path d="M6,187.5 V194.5 H12 M4.5,189.5 H10.5 V195.5" fill="none" stroke="#e4e4e4" stroke-width="0.9"/><rect x="7" y="190.5" width="3" height="3" fill="#9a9a9a"/>
<path d="M23.8,187.5 L18,195 M23,187 L25,189 L21.5,193 L19.8,191" fill="#e4e4e4" stroke="#e4e4e4" stroke-width="0.9"/><path d="M27,194 L27,196 L25,196 Z" fill="#a8a8a8"/>
<path d="M5.5,200 Q5,198 6.5,198.5 L8,197.5 L9.5,198 L11,198.5 Q12,199.5 11,202 Q9.5,204.5 7.5,204 Q6,203 5.5,200 Z" fill="#e4e4e4"/><path d="M14,203.5 L14,205.5 L12,205.5 Z" fill="#a8a8a8"/>
<circle cx="20.3" cy="199.8" r="2.4" fill="none" stroke="#e4e4e4" stroke-width="1"/><path d="M22,201.6 L24.5,204" stroke="#e4e4e4" stroke-width="1.3"/>
<rect x="10" y="217" width="14.2" height="14.8" fill="#f4f4f4"/>
<rect x="13.2" y="220.6" width="7.6" height="7.4" fill="#3a3a3a"/>
<path d="M10.3,231.5 L24,217.3" stroke="#e0302a" stroke-width="1.1"/>
<rect x="2.4" y="210.3" width="14" height="13.6" fill="#2e1711" stroke="#8d8d8d" stroke-width="0.9"/>
<path d="M21.5,211 Q24.5,210.5 24.3,214" fill="none" stroke="#e4e4e4" stroke-width="0.9"/><path d="M23,213.3 L24.3,214.8 L25.5,213.3 Z M22,210 L20.8,211 L22,212 Z" fill="#e4e4e4"/>
<rect x="3" y="227.5" width="2.4" height="2.4" fill="#f4f4f4"/><rect x="4.2" y="226.3" width="2.4" height="2.4" fill="none" stroke="#b0b0b0" stroke-width="0.5"/>
<rect x="3.3" y="236.6" width="5.7" height="5.2" fill="#2a1510" stroke="#4a4a4a" stroke-width="0.5"/>
<rect x="11.3" y="236.6" width="5.7" height="5.2" fill="#ef5a33"/><rect x="12.6" y="237.8" width="3.1" height="2.8" fill="#ffa070"/>
<circle cx="22.2" cy="239.2" r="3" fill="#f4f4f4"/><path d="M20.2,241.2 L24.2,237.2" stroke="#d8201c" stroke-width="1.3"/>
<circle cx="6.5" cy="249.5" r="2.9" fill="#2a2a2a"/><circle cx="6" cy="249" r="1.6" fill="#e4e4e4"/><circle cx="7.3" cy="250.2" r="1.6" fill="#bdbdbd"/>
<circle cx="14.2" cy="249" r="1.8" fill="#d0d0d0"/><circle cx="15.3" cy="250.2" r="1.6" fill="#9a9a9a"/>
<circle cx="22" cy="249.5" r="1.5" fill="none" stroke="#6a6a6a" stroke-width="0.6"/>
<rect x="13" y="256.5" width="6.5" height="4.3" fill="none" stroke="#bdbdbd" stroke-width="0.9"/><rect x="10" y="259" width="6" height="4" fill="#535353" stroke="#bdbdbd" stroke-width="0.9"/>
<rect x="30" y="388.6" width="187" height="0.6" fill="#5a5a5a"/>
<text x="34" y="396.2" font-family="Liberation Sans" font-size="6" fill="#dadada" textLength="10.5" lengthAdjust="spacingAndGlyphs">100%</text>
<path d="M55.5,391.8 L56.7,393 L57.9,391.8" fill="none" stroke="#d0d0d0" stroke-width="0.8"/>
<rect x="64.8" y="391" width="2.6" height="4" fill="#7a7a7a"/>
<rect x="72.5" y="391" width="2.6" height="4" fill="#7a7a7a"/>
<rect x="110.5" y="391" width="2.6" height="4" fill="#7a7a7a"/>
<rect x="117.5" y="391" width="2.6" height="4" fill="#7a7a7a"/>
<rect x="80.2" y="390.8" width="0.9" height="4.2" fill="#d8d8d8"/>
<path d="M96.3,391.8 L97.5,393 L98.7,391.8" fill="none" stroke="#d0d0d0" stroke-width="0.8"/>
<g fill="none" stroke="#e6e6e6" stroke-width="1.7" stroke-linecap="square" stroke-linejoin="miter"><path transform="translate(131.50,391.30) scale(0.380)" d="M4.5,1 L1.5,5 M3.5,2.5 H8 Q7,7.5 2.5,9.6 M3.8,5 L7,6.8 M8.2,0.3 L8.9,1.8 M9.6,0.1 L10.3,1.6"/><path transform="translate(135.55,391.30) scale(0.380)" d="M8.5,1 L1.5,6.2 M5.2,3.8 V9.6"/><path transform="translate(139.60,391.30) scale(0.380)" d="M2.5,1 V8.8 L9,4.5"/><path transform="translate(143.65,391.30) scale(0.380)" d="M4,1 L1.5,4.5 M3,2.8 H8 Q7,7.5 3,9.6"/><path transform="translate(147.70,391.30) scale(0.380)" d="M3.5,1 V9.8 M3.5,4.5 L8,6.8"/><path transform="translate(151.75,391.30) scale(0.380)" d="M1.5,2 H4.5 V5 H1.5 Z M1,7 H5 M3,5 V9.5 M6,1 V9.5 M6,2 H9 V8 M6,5 H9"/><path transform="translate(155.80,391.30) scale(0.380)" d="M1,2.5 H9 M5,1 V4.5 M2,4.5 H8 V9.5 H2 Z M2,7 H8"/><path transform="translate(159.85,391.30) scale(0.380)" d="M1.5,3 L2.5,5 M4,2.5 L5,4.5 M8.5,2.5 Q7.5,8 3,9.6"/><path transform="translate(163.90,391.30) scale(0.380)" d="M1,5.2 H9.2"/><path transform="translate(167.95,391.30) scale(0.380)" d="M3,1.5 Q3,7.5 1,9.5 M5.5,1 V9 Q8,8 9.5,6"/><path transform="translate(172.00,391.30) scale(0.380)" d="M2,2.6 H8 M5,1 L2,7.5 Q5,5 7,6.5 Q8.5,8 4,9.4 M8.8,4.6 L6.8,5.8"/><path transform="translate(176.05,391.30) scale(0.380)" d="M1,1.5 L3,3 M1,5 L3,6.5 M1.5,9.5 L3.5,7 M4.5,2 H9 M5,4.5 H8.5 M6.8,1 V9.5 M4.5,7 H9.2"/><path transform="translate(180.10,391.30) scale(0.380)" d="M3,1.5 V6 M7,1.5 Q7.5,8 4,9.6"/><path transform="translate(184.15,391.30) scale(0.380)" d="M1.5,2 H4.5 V5 H1.5 Z M1,7 H5 M3,5 V9.5 M6,1 V9.5 M6,2 H9 V8 M6,5 H9"/><path transform="translate(188.20,391.30) scale(0.380)" d="M3,1.5 L6.5,2.2 M2,4 H8 L2,9.5 Q5,6 6,8 Q6.5,9.5 9,9.2"/></g>
<path d="M206,390.5 L208,392.5 L206,394.5 Z" fill="#e0e0e0"/>
<rect x="212.2" y="391" width="2.2" height="4" fill="#777777"/>
<defs><linearGradient id="edg" x1="0" y1="0" x2="0" y2="1"><stop offset="0" stop-color="#121212"/><stop offset="0.6" stop-color="#1c2621"/><stop offset="1" stop-color="#35483b"/></linearGradient></defs>
<rect x="597.2" y="30" width="1.2" height="365" fill="#5a5d5d"/>
<rect x="599" y="30" width="1" height="365" fill="url(#edg)"/>
<rect x="0" y="395" width="600" height="30" fill="#b4b4b4"/></svg>
</body></html>
